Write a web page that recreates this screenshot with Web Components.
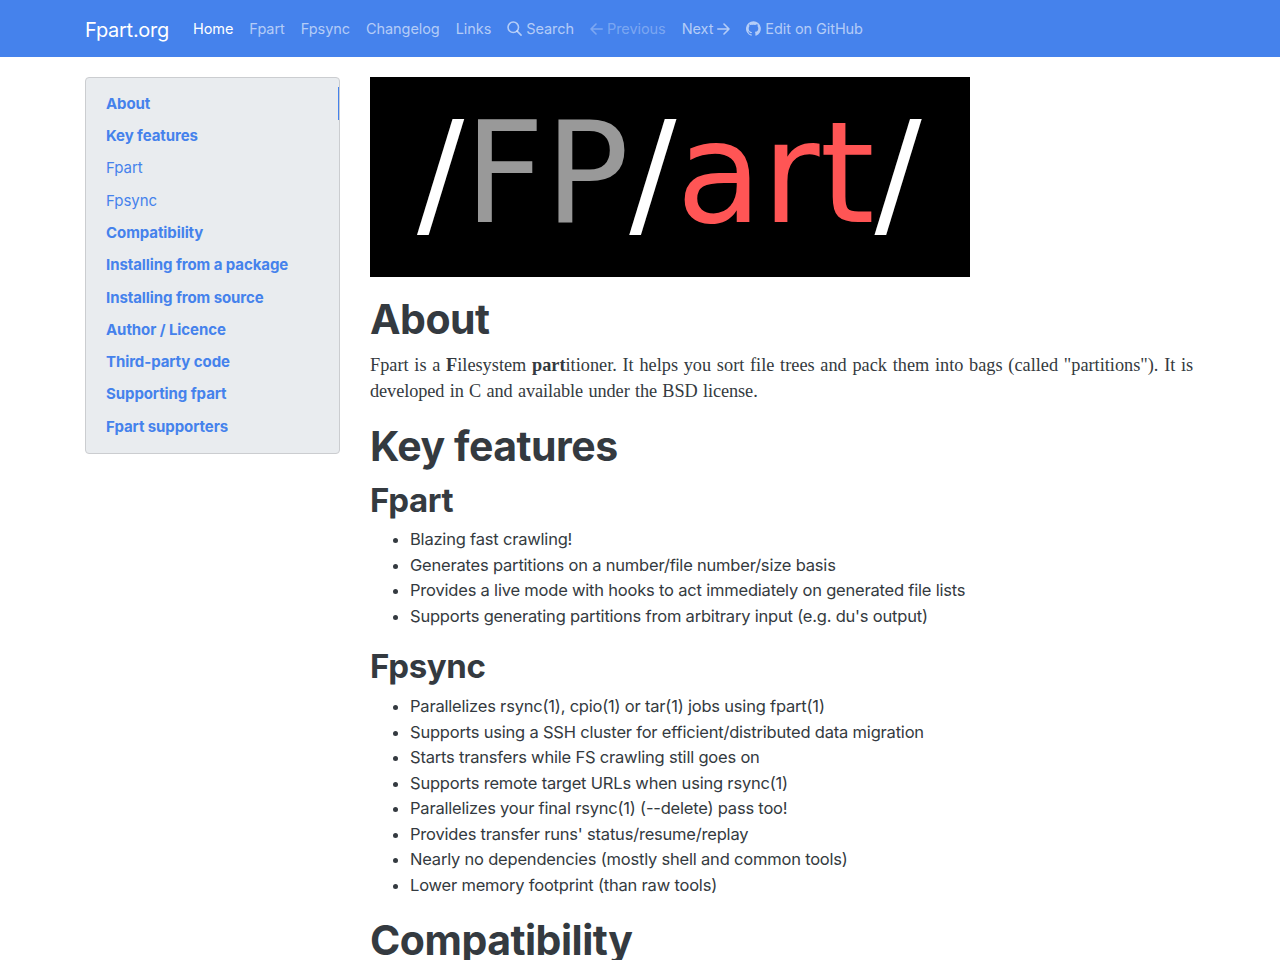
<!DOCTYPE html>
<html lang="en">
<head>
<meta charset="utf-8">
<title>Fpart.org</title>
<style>
  html, body { margin: 0; padding: 0; background: #fff; height: 960px; overflow: hidden; }
  body { font-family: Inter, "Liberation Sans", sans-serif; color: #343a40; font-size: 16.5px; letter-spacing: -0.2px; line-height: 25.5px; }
</style>
</head>
<body>
<site-navbar></site-navbar>
<page-layout>
  <side-toc slot="side"></side-toc>
  <fpart-logo></fpart-logo>
  <doc-heading level="1">About</doc-heading>
  <serif-para>Fpart is a <b>F</b>ilesystem <b>part</b>itioner. It helps you sort file trees and pack them into bags (called "partitions"). It is <span>developed in C and available under the BSD license.</span></serif-para>
  <doc-heading level="1">Key features</doc-heading>
  <doc-heading level="2">Fpart</doc-heading>
  <bullet-list>
    <li>Blazing fast crawling!</li>
    <li>Generates partitions on a number/file number/size basis</li>
    <li>Provides a live mode with hooks to act immediately on generated file lists</li>
    <li>Supports generating partitions from arbitrary input (e.g. du's output)</li>
  </bullet-list>
  <doc-heading level="2">Fpsync</doc-heading>
  <bullet-list>
    <li>Parallelizes rsync(1), cpio(1) or tar(1) jobs using fpart(1)</li>
    <li>Supports using a SSH cluster for efficient/distributed data migration</li>
    <li>Starts transfers while FS crawling still goes on</li>
    <li>Supports remote target URLs when using rsync(1)</li>
    <li>Parallelizes your final rsync(1) (--delete) pass too!</li>
    <li>Provides transfer runs' status/resume/replay</li>
    <li>Nearly no dependencies (mostly shell and common tools)</li>
    <li>Lower memory footprint (than raw tools)</li>
  </bullet-list>
  <doc-heading level="1">Compatibility</doc-heading>
</page-layout>

<script>
'use strict';

(function () {
  const icons = {
    search: '<svg width="15" height="15" viewBox="0 0 16 16" fill="none" stroke="currentColor" stroke-width="1.7" stroke-linecap="round"><circle cx="6.7" cy="6.7" r="5.6"/><path d="M10.8 10.8 15 15"/></svg>',
    left: '<svg width="13" height="14" viewBox="0 0 13 14" fill="none" stroke="currentColor" stroke-width="1.6" stroke-linecap="round" stroke-linejoin="round"><path d="M12.200 7H1M6 2 1 7l5 5"/></svg>',
    right: '<svg width="13" height="14" viewBox="0 0 13 14" fill="none" stroke="currentColor" stroke-width="1.6" stroke-linecap="round" stroke-linejoin="round"><path d="M.8 7H12M7 2l5 5-5 5"/></svg>',
    github: '<svg width="15" height="15" viewBox="0 0 16 16" fill="currentColor"><path d="M8 .2a8 8 0 0 0-2.5 15.6c.4.1.5-.2.5-.4v-1.400c-2.200.5-2.700-1-2.700-1-.4-.9-.9-1.200-.9-1.200-.7-.5.1-.5.1-.5.8.1 1.200.8 1.200.8.7 1.200 1.900.9 2.300.7.1-.5.3-.9.5-1.100-1.800-.2-3.600-.9-3.600-4 0-.9.3-1.600.8-2.100-.1-.2-.4-1 .1-2.100 0 0 .7-.2 2.200.8a7.600 7.600 0 0 1 4 0c1.500-1 2.200-.8 2.200-.8.4 1.100.2 1.900.1 2.100.5.6.8 1.300.8 2.100 0 3.100-1.900 3.700-3.700 3.900.3.300.6.800.6 1.500v2.200c0 .2.100.5.600.4A8 8 0 0 0 8 .2z"/></svg>'
  };

  class SiteNavbar extends HTMLElement {
    constructor() {
      super();
      const shadow = this.attachShadow({ mode: 'open' });
      const links = [
        ['Home', 'active'], ['Fpart'], ['Fpsync'], ['Changelog'], ['Links'],
        [icons.search + 'Search'], [icons.left + 'Previous', 'disabled'],
        ['Next' + icons.right], [icons.github + 'Edit on GitHub']
      ];
      shadow.innerHTML = `
        <style>
          :host { display: block; background: #4582ec; height: 57px; letter-spacing: normal; }
          nav { display: flex; align-items: center; height: 57px; padding-left: 85px; box-sizing: border-box; }
          .brand { color: #fff; font-size: 20px; letter-spacing: -0.28px; margin-right: 16px; line-height: 32px; position: relative; top: 1px; }
          ul { display: flex; margin: 0; padding: 0; list-style: none; }
          a { display: flex; align-items: center; gap: 4px; padding: 0 8px; font-size: 14.5px; letter-spacing: -0.07px; color: rgba(255,255,255,.6); text-decoration: none; white-space: nowrap; }
          a.active { color: #fff; }
          a.disabled { color: rgba(255,255,255,.3); }
        </style>
        <nav>
          <a class="brand" style="padding:0">Fpart.org</a>
          <ul>
            ${links.map((l) => `<li><a class="${l[1] || ''}">${l[0]}</a></li>`).join('')}
          </ul>
        </nav>`;
    }
  }

  class PageLayout extends HTMLElement {
    constructor() {
      super();
      const shadow = this.attachShadow({ mode: 'open' });
      shadow.innerHTML = `
        <style>
          :host { display: block; }
          .row { display: grid; grid-template-columns: 255px 825px; column-gap: 30px; padding: 20px 85px 0; }
          main { min-width: 0; }
        </style>
        <div class="row">
          <aside><slot name="side"></slot></aside>
          <main><slot></slot></main>
        </div>`;
    }
  }

  class SideToc extends HTMLElement {
    constructor() {
      super();
      const shadow = this.attachShadow({ mode: 'open' });
      const items = [
        ['About', 1, 1], ['Key features', 1], ['Fpart'], ['Fpsync'], ['Compatibility', 1],
        ['Installing from a package', 1], ['Installing from source', 1], ['Author / Licence', 1],
        ['Third-party code', 1], ['Supporting fpart', 1], ['Fpart supporters', 1]
      ];
      shadow.innerHTML = `
        <style>
          :host { display: block; letter-spacing: -0.08px; }
          ul { list-style: none; margin: 0; padding: 9.4px 0 10.6px; background: #e9ecef; border: 1px solid #cbcdd0; border-radius: 4px; }
          li { height: 32.3px; display: flex; align-items: center; padding-left: 20px; font-size: 15px; color: #4582ec; position: relative; }
          li.b { font-weight: 700; }
          li.on::after { content: ''; position: absolute; right: 0; top: 0; bottom: 0; width: 1px; background: #4582ec; }
        </style>
        <ul>${items.map((i) => `<li class="${i[1] ? 'b' : ''} ${i[2] ? 'on' : ''}">${i[0]}</li>`).join('')}</ul>`;
    }
  }

  class FpartLogo extends HTMLElement {
    constructor() {
      super();
      const shadow = this.attachShadow({ mode: 'open' });
      shadow.innerHTML = `
        <style>
          :host { display: block; width: 600px; height: 200px; margin-bottom: 17px; }
          svg { display: block; }
          text { font-family: "DejaVu Sans", sans-serif; font-size: 140px; letter-spacing: normal; }
        </style>
        <svg width="600" height="200" viewBox="0 0 600 200">
          <rect width="600" height="200" fill="#000"/>
          <text x="47" y="145" fill="#fff"><tspan>/</tspan><tspan fill="#999">FP</tspan><tspan>/</tspan><tspan fill="#f55">art</tspan><tspan>/</tspan></text>
        </svg>`;
    }
  }

  class DocHeading extends HTMLElement {
    constructor() {
      super();
      const shadow = this.attachShadow({ mode: 'open' });
      shadow.innerHTML = `
        <style>
          :host { display: block; font-weight: 700; color: #343a40; }
          :host([level="1"]) { font-size: 41px; letter-spacing: -0.5px; line-height: 51px; margin: 0 0 8px; }
          :host([level="2"]) { font-size: 33px; letter-spacing: -0.4px; line-height: 40.8px; margin: 0 0 7px; }
        </style>
        <slot></slot>`;
    }
  }

  class SerifPara extends HTMLElement {
    constructor() {
      super();
      const shadow = this.attachShadow({ mode: 'open' });
      shadow.innerHTML = `
        <style>
          :host { display: block; font-family: "Liberation Serif", "DejaVu Serif", serif; font-size: 18.3px; letter-spacing: 0; word-spacing: 1.15px; line-height: 25.5px; margin-bottom: 16.5px; }
          ::slotted(span) { letter-spacing: -0.08px; word-spacing: 0.8px; }
        </style>
        <slot></slot>`;
    }
  }

  class BulletList extends HTMLElement {
    constructor() {
      super();
      const shadow = this.attachShadow({ mode: 'open' });
      shadow.innerHTML = `
        <style>
          :host { display: block; }
          ul { margin: 0 0 17px; padding-left: 40px; }
        </style>
        <ul><slot></slot></ul>`;
    }
  }

  customElements.define('site-navbar', SiteNavbar);
  customElements.define('page-layout', PageLayout);
  customElements.define('side-toc', SideToc);
  customElements.define('fpart-logo', FpartLogo);
  customElements.define('doc-heading', DocHeading);
  customElements.define('serif-para', SerifPara);
  customElements.define('bullet-list', BulletList);
})();
</script>
</body>
</html>
